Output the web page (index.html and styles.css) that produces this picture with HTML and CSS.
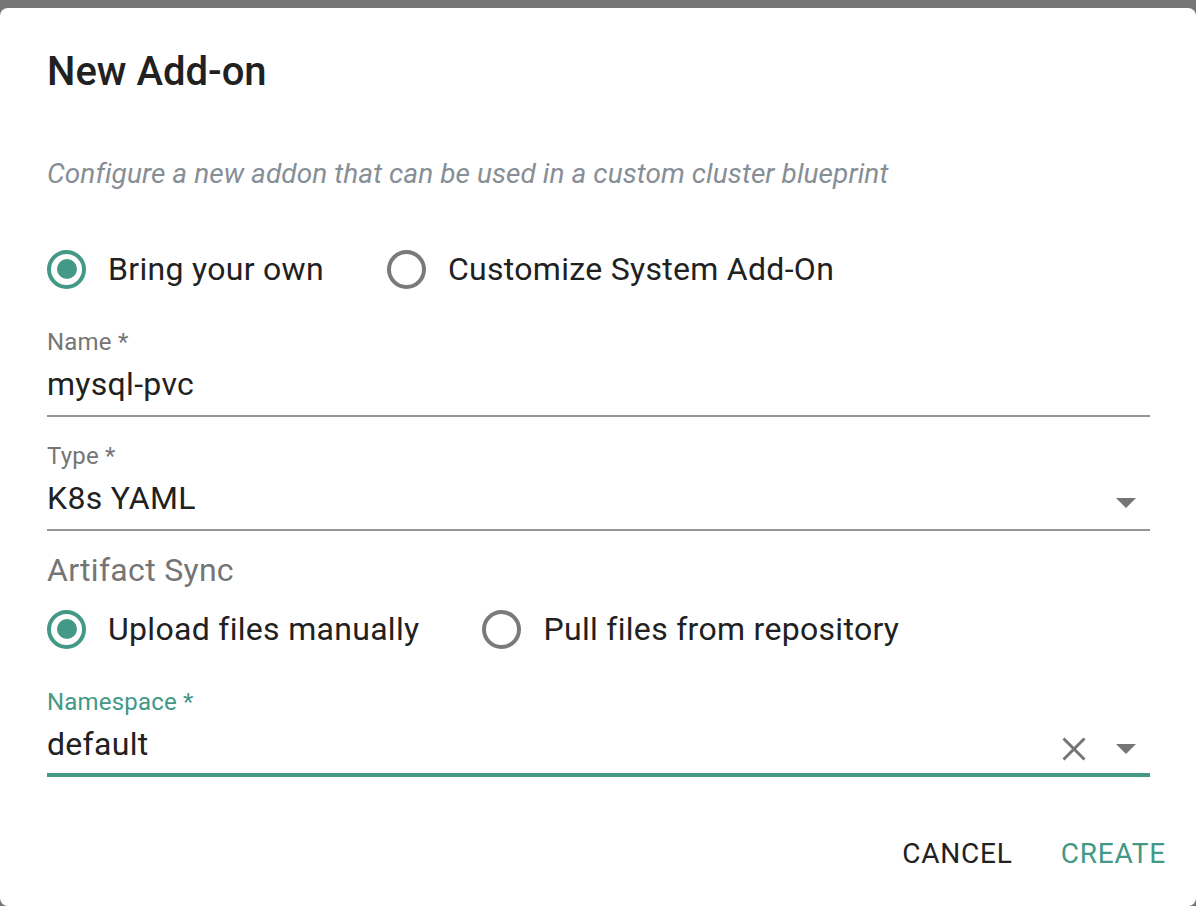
FILE: index.html
```html
<!DOCTYPE html>
<html lang="en">
<head>
<meta charset="utf-8">
<title>New Add-on</title>
<link rel="stylesheet" href="styles.css">
</head>
<body>
<div class="dialog">
  <h2 class="title">New Add-on</h2>
  <p class="subtitle">Configure a new addon that can be used in a custom cluster blueprint</p>

  <div class="radio-row first-row">
    <label class="radio-option">
      <span class="radio checked"><span class="dot"></span></span>
      <span class="radio-label">Bring your own</span>
    </label>
    <label class="radio-option">
      <span class="radio"></span>
      <span class="radio-label">Customize System Add-On</span>
    </label>
  </div>

  <div class="field field-name">
    <div class="field-label">Name *</div>
    <div class="field-input">
      <span class="value">mysql-pvc</span>
    </div>
  </div>

  <div class="field field-type">
    <div class="field-label">Type *</div>
    <div class="field-input">
      <span class="value">K8s YAML</span>
      <span class="adorn">
        <svg class="arrow" width="20" height="10" viewBox="0 0 20 10"><path d="M0 0h20L10 10z" fill="#757575"/></svg>
      </span>
    </div>
  </div>

  <div class="section-title">Artifact Sync</div>

  <div class="radio-row second-row">
    <label class="radio-option">
      <span class="radio checked"><span class="dot"></span></span>
      <span class="radio-label">Upload files manually</span>
    </label>
    <label class="radio-option">
      <span class="radio"></span>
      <span class="radio-label">Pull files from repository</span>
    </label>
  </div>

  <div class="field field-namespace focused">
    <div class="field-label">Namespace *</div>
    <div class="field-input">
      <span class="value">default</span>
      <span class="adorn">
        <svg class="clear" width="24" height="24" viewBox="0 0 24 24"><path d="M1.5 1.5L22.5 22.5M22.5 1.5L1.5 22.5" stroke="#757575" stroke-width="3" fill="none"/></svg>
        <svg class="arrow" width="20" height="10" viewBox="0 0 20 10"><path d="M0 0h20L10 10z" fill="#757575"/></svg>
      </span>
    </div>
  </div>

  <div class="actions">
    <button class="btn btn-cancel">Cancel</button>
    <button class="btn btn-create">Create</button>
  </div>
</div>
</body>
</html>
```

FILE: styles.css
```css
html, body {
  margin: 0;
  padding: 0;
}

body {
  background: #767676;
  font-family: Roboto, "Liberation Sans", sans-serif;
  color: #212121;
  height: 906px;
  overflow: hidden;
}

.dialog {
  margin-top: 8px;
  height: 898px;
  box-sizing: border-box;
  background: #ffffff;
  border-radius: 8px;
  padding: 40px 46px 0 47px;
  display: flex;
  flex-direction: column;
}

.title {
  margin: 0;
  font-size: 40px;
  line-height: 48px;
  font-weight: 500;
  color: #212121;
}

.subtitle {
  margin: 62px 0 0;
  font-size: 28px;
  line-height: 32px;
  font-style: italic;
  letter-spacing: 0.07px;
  color: #868e96;
}

.radio-row {
  display: flex;
  align-items: center;
  height: 48px;
}

.first-row {
  margin-top: 55px;
}

.second-row {
  margin-top: 15px;
}

.radio-option {
  display: flex;
  align-items: center;
  margin-right: 63px;
}

.radio {
  width: 39px;
  height: 39px;
  box-sizing: border-box;
  border: 4px solid #7a7a7a;
  border-radius: 50%;
  display: flex;
  align-items: center;
  justify-content: center;
  flex: none;
}

.radio.checked {
  border-color: #439886;
}

.dot {
  width: 20px;
  height: 20px;
  border-radius: 50%;
  background: #439886;
}

.radio-label {
  margin-left: 22px;
  font-size: 32px;
  line-height: 40px;
  letter-spacing: 0.3px;
  color: #212121;
}

.field {
  display: flex;
  flex-direction: column;
}

.field-name {
  margin-top: 35px;
}

.field-type {
  margin-top: 25px;
}

.field-namespace {
  margin-top: 35px;
}

.field-label {
  font-size: 24px;
  line-height: 28px;
  letter-spacing: 0.2px;
  color: #757575;
}

.focused .field-label {
  color: #439886;
}

.field-input {
  display: flex;
  align-items: flex-start;
  margin-top: 8px;
  padding-bottom: 11px;
  border-bottom: 2px solid #949494;
}

.focused .field-input {
  padding-bottom: 9px;
  border-bottom: 4px solid #439886;
}

.value {
  flex: 1;
  font-size: 32px;
  line-height: 40px;
  letter-spacing: 0.3px;
  color: #212121;
}

.adorn {
  display: flex;
  align-items: center;
  height: 24px;
  margin-top: 13px;
  margin-right: 14px;
}

.clear {
  margin-right: 30px;
}

.section-title {
  margin-top: 19px;
  font-size: 32px;
  line-height: 40px;
  letter-spacing: 0.3px;
  color: #757575;
}

.actions {
  margin-top: auto;
  margin-right: -32px;
  margin-bottom: 20px;
  display: flex;
  justify-content: flex-end;
  gap: 16px;
}

.btn {
  background: none;
  border: none;
  padding: 12px 16px;
  font-family: Roboto, "Liberation Sans", sans-serif;
  font-size: 28px;
  line-height: 40px;
  font-weight: 400;
  letter-spacing: 0.8px;
  text-transform: uppercase;
  cursor: pointer;
}

.btn-cancel {
  color: #212121;
}

.btn-create {
  color: #439886;
}
```
